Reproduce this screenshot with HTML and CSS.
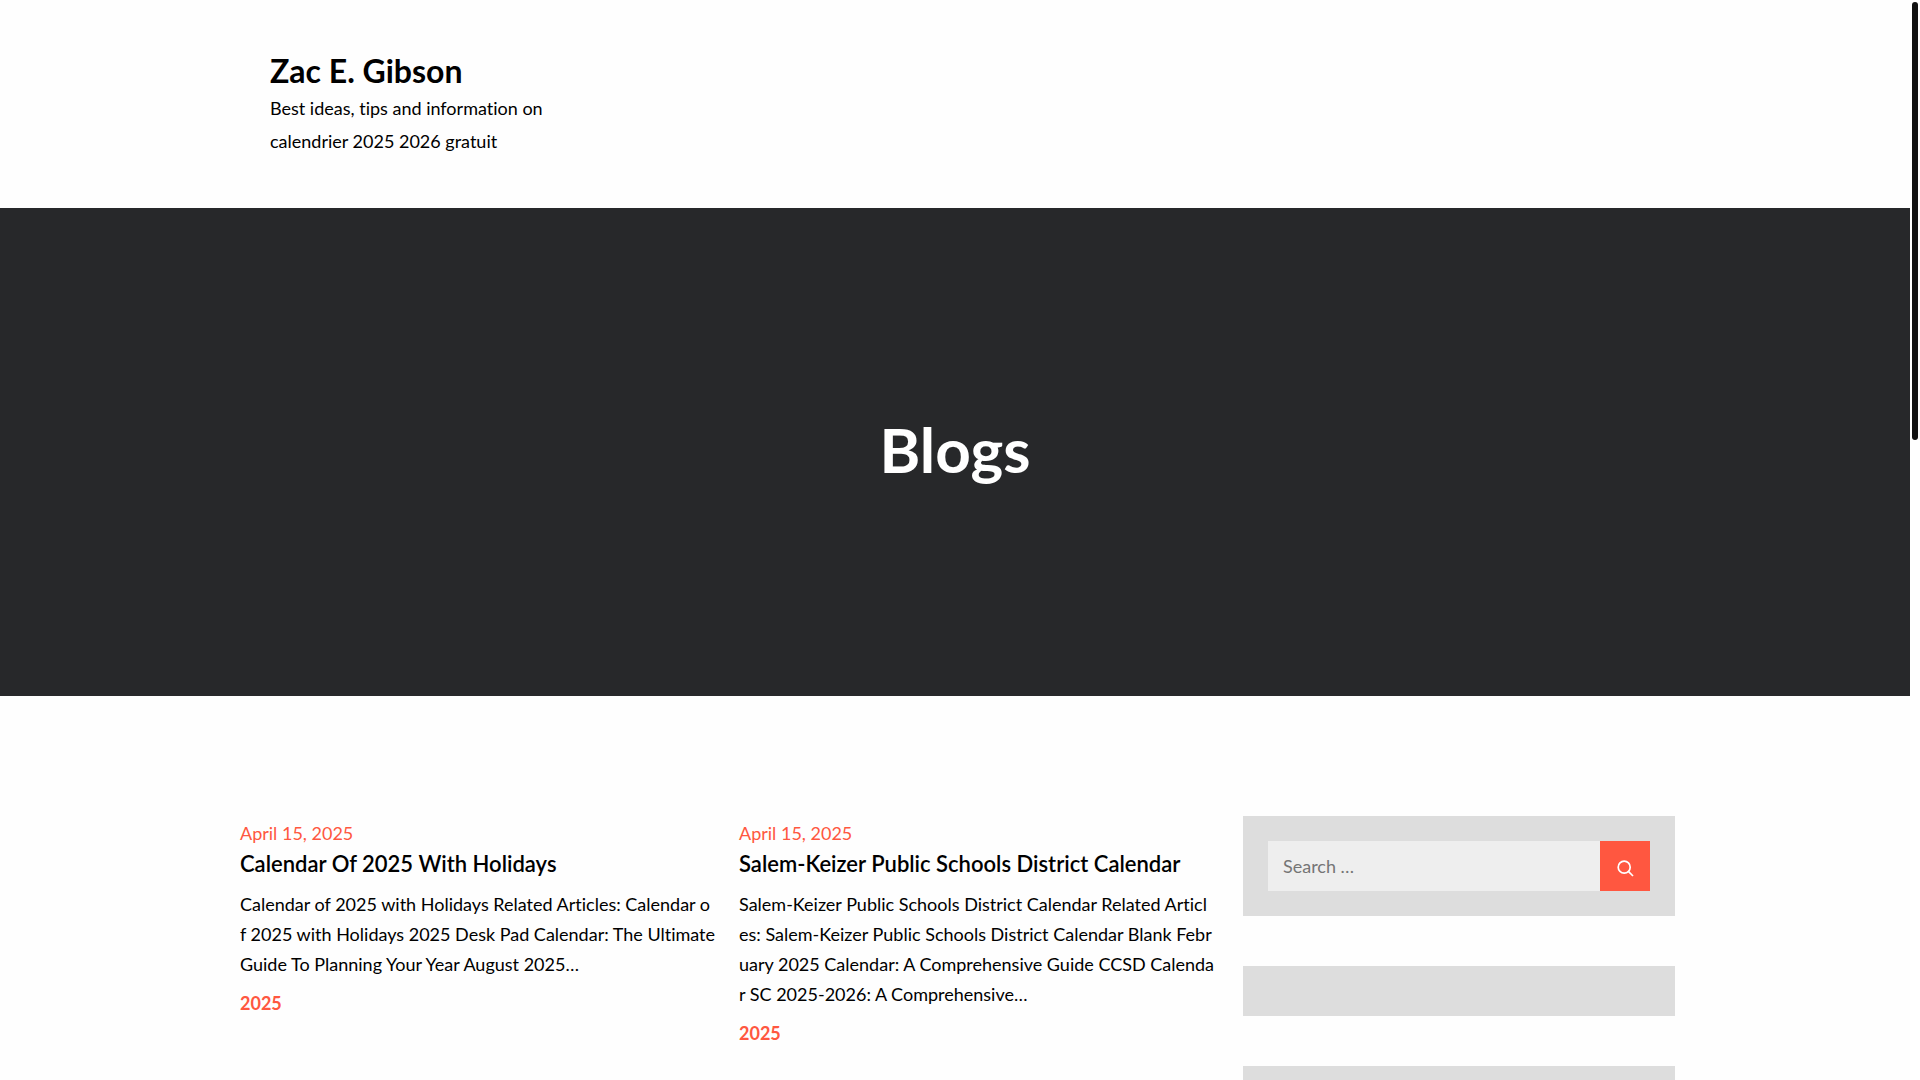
FILE: index.html
```
<!DOCTYPE html>
<html lang="en">
<head>
  <meta charset="UTF-8">
  <meta name="viewport" content="width=device-width, initial-scale=1.0">
  <title>Blogs – Zac E. Gibson</title>
  <link rel="stylesheet" href="styles.css">
</head>
<body>
  <header class="site-header">
    <div class="wrapper">
      <div class="site-branding">
        <p class="site-title"><a href="#">Zac E. Gibson</a></p>
        <p class="site-description">Best ideas, tips and information on calendrier 2025 2026 gratuit</p>
      </div>
    </div>
  </header>

  <section class="page-banner">
    <h1>Blogs</h1>
  </section>

  <div class="wrapper content">
    <main class="posts">
      <article class="post">
        <a class="post-date" href="#"><time datetime="2025-04-15">April 15, 2025</time></a>
        <h2 class="post-title"><a href="#">Calendar Of 2025 With Holidays</a></h2>
        <p class="post-excerpt">Calendar of 2025 with Holidays Related Articles: Calendar o<br>f 2025 with Holidays 2025 Desk Pad Calendar: The Ultimate<br>Guide To Planning Your Year August 2025…</p>
        <a class="post-category" href="#">2025</a>
      </article>
      <article class="post">
        <a class="post-date" href="#"><time datetime="2025-04-15">April 15, 2025</time></a>
        <h2 class="post-title"><a href="#">Salem-Keizer Public Schools District Calendar</a></h2>
        <p class="post-excerpt">Salem-Keizer Public Schools District Calendar Related Articl<br>es: Salem-Keizer Public Schools District Calendar Blank Febr<br>uary 2025 Calendar: A Comprehensive Guide CCSD Calenda<br>r SC 2025-2026: A Comprehensive…</p>
        <a class="post-category" href="#">2025</a>
      </article>
    </main>

    <aside class="sidebar">
      <section class="widget">
        <form class="search-form" role="search">
          <input type="search" placeholder="Search …" aria-label="Search for">
          <button type="submit" aria-label="Search">
            <svg width="17" height="17" viewBox="0 0 17 17" fill="none" stroke="#fff" stroke-width="1.7">
              <circle cx="7.2" cy="7.2" r="6"/>
              <path d="M11.4 11.4L16 16"/>
            </svg>
          </button>
        </form>
      </section>
      <section class="widget"></section>
      <section class="widget"></section>
    </aside>
  </div>

  <div class="scroll-rail"><div class="scroll-thumb"></div></div>
</body>
</html>
```
FILE: styles.css
```
* {
  box-sizing: border-box;
}
body {
  margin: 0;
  padding-right: 10px;
  background: #fefefe;
  color: #000;
  font-family: Lato, sans-serif;
  font-size: 18px;
  font-variant-ligatures: none;
  line-height: 33px;
}
h1, h2, p {
  margin: 0;
}
a {
  color: #ff5740;
  text-decoration: none;
}
.wrapper {
  max-width: 1430px;
  margin: 0 auto;
}

/* header */
.site-header {
  padding: 50px 0;
}
.site-branding {
  max-width: 330px;
  padding-left: 30px;
}
.site-title {
  font-size: 32px;
  font-weight: 700;
  line-height: 42px;
}
.site-title a {
  color: #000;
}

/* banner */
.page-banner {
  display: flex;
  align-items: center;
  justify-content: center;
  min-height: 488px;
  padding-bottom: 6px;
  background: #27282a;
  color: #fff;
}
.page-banner h1 {
  font-size: 62px;
  font-weight: 700;
  line-height: 72px;
}

/* content */
.content {
  display: flex;
  align-items: flex-start;
  gap: 35px;
  padding: 120px 0;
}
.posts {
  flex: 1;
  display: grid;
  grid-template-columns: repeat(2, minmax(0, 1fr));
  gap: 30px;
}
.post-date {
  display: block;
  line-height: 35px;
}
.post-title {
  margin-bottom: 12px;
  font-family: "Arima Madurai", Lato, sans-serif;
  font-size: 22px;
  font-weight: 600;
  line-height: 26px;
  white-space: nowrap;
}
.post-title a {
  color: #000;
}
.post-excerpt {
  margin-bottom: 8px;
  line-height: 30px;
  white-space: nowrap;
}
.post-category {
  display: block;
  font-weight: 700;
}

/* sidebar */
.sidebar {
  flex: 0 0 432px;
  margin-right: -5px;
}
.widget {
  margin-bottom: 50px;
  padding: 25px;
  background: #ddd;
}
.search-form {
  display: flex;
}
.search-form input {
  flex: 1;
  min-width: 0;
  height: 50px;
  padding: 0 15px;
  border: 0;
  border-radius: 0;
  background: #eee;
  font: inherit;
}
.search-form input::placeholder {
  color: #757575;
}
.search-form button {
  display: flex;
  align-items: center;
  justify-content: center;
  width: 50px;
  height: 50px;
  padding: 4px 0 0;
  border: 0;
  background: #ff5740;
  cursor: pointer;
}

/* scroll rail */
.scroll-rail {
  position: fixed;
  top: 0;
  right: 0;
  width: 10px;
  height: 100%;
  padding: 2px;
  background: #fff;
}
.scroll-thumb {
  height: 438px;
  border-radius: 3px;
  background: #111;
}
```
